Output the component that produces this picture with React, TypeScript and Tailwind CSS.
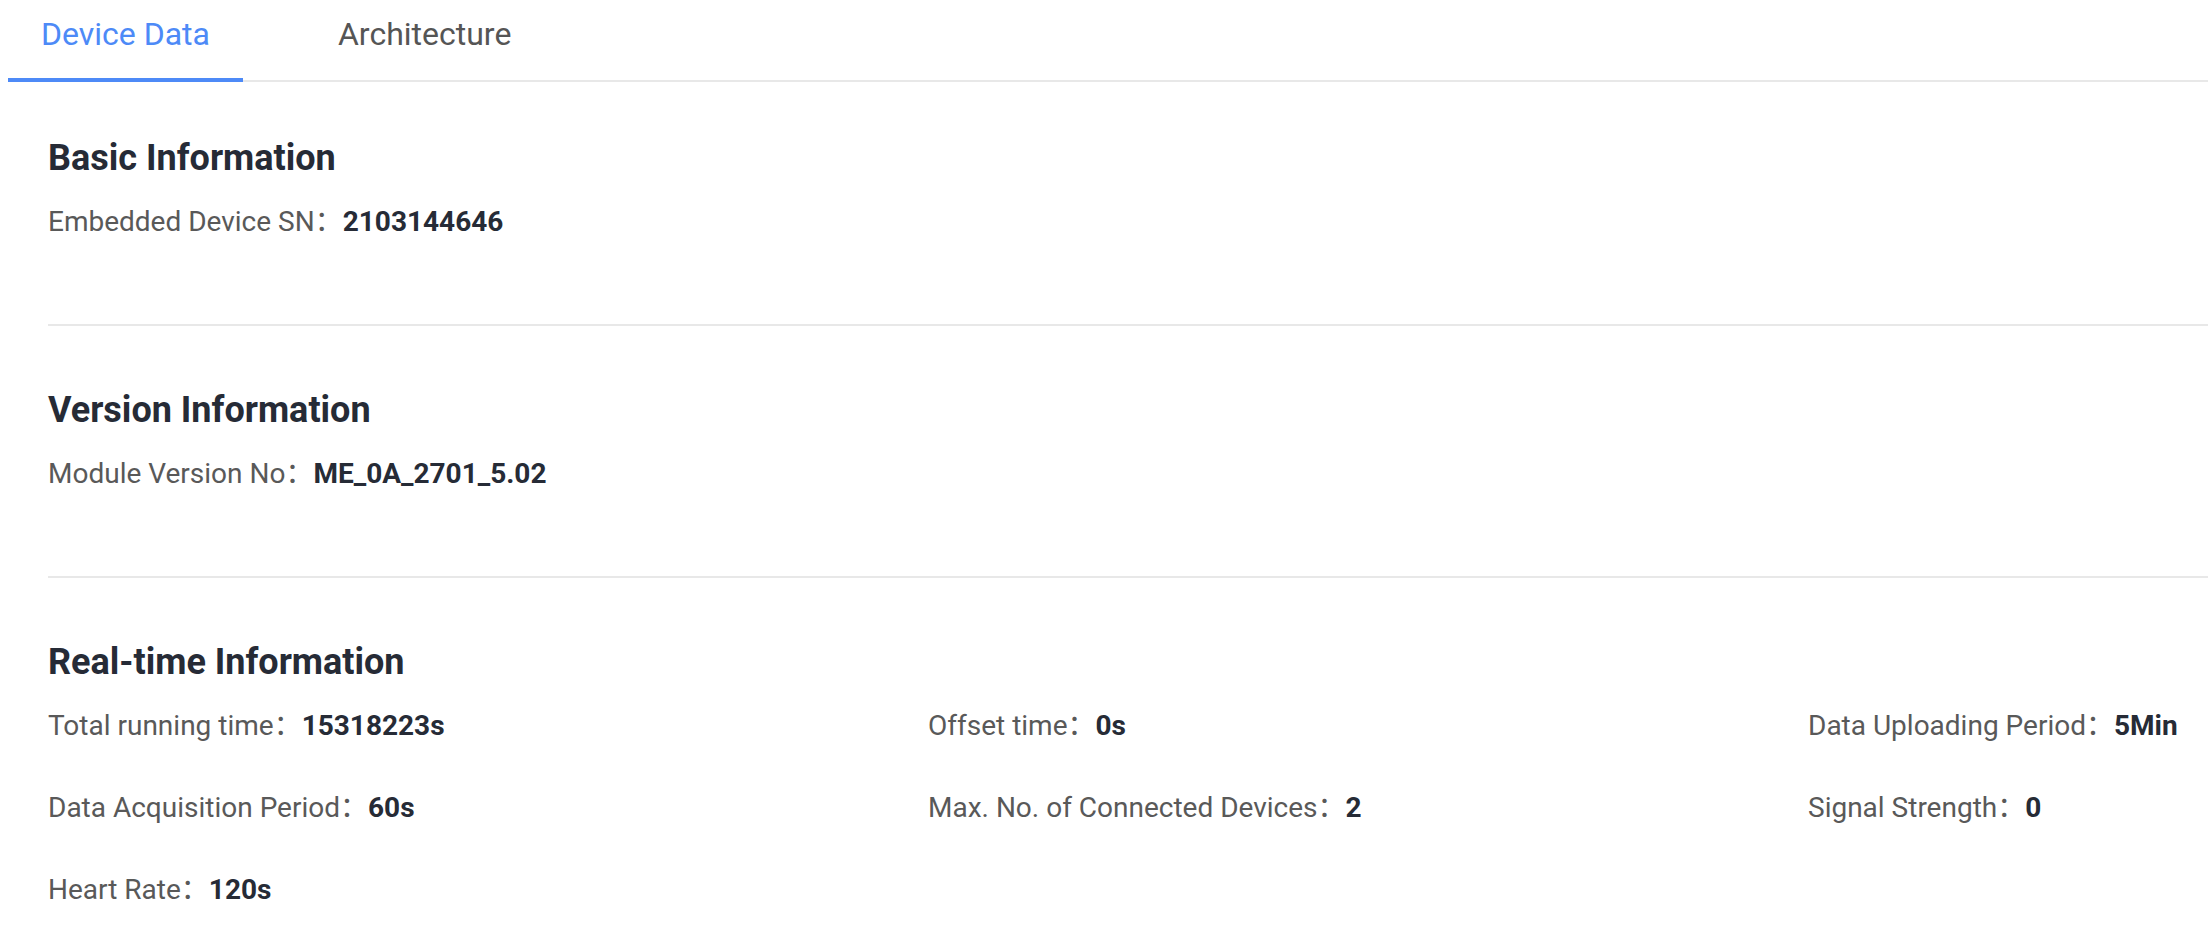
import React from 'react';

type Field = { label: string; value: string };

const basicInfo: Field[] = [{ label: 'Embedded Device SN', value: '2103144646' }];
const versionInfo: Field[] = [{ label: 'Module Version No', value: 'ME_0A_2701_5.02' }];

const realtimeColumns: Field[][] = [
  [
    { label: 'Total running time', value: '15318223s' },
    { label: 'Data Acquisition Period', value: '60s' },
    { label: 'Heart Rate', value: '120s' },
  ],
  [
    { label: 'Offset time', value: '0s' },
    { label: 'Max. No. of Connected Devices', value: '2' },
  ],
  [
    { label: 'Data Uploading Period', value: '5Min' },
    { label: 'Signal Strength', value: '0' },
  ],
];

function InfoField({ label, value }: Field) {
  return (
    <div className="h-[40px] text-[28px] leading-[40px] whitespace-nowrap">
      <span className="text-[#595959]">{label}</span>
      <span className="text-[#595959] leading-none font-['Noto_Sans_CJK_SC',sans-serif]">：</span>
      <span className="font-bold text-[#262b36]">{value}</span>
    </div>
  );
}

function SectionTitle({ children }: { children: React.ReactNode }) {
  return <h2 className="text-[36px] leading-[48px] font-bold text-[#262b36]">{children}</h2>;
}

function Divider() {
  return <div className="h-[2px] bg-[#e8e8e8]" />;
}

export default function App() {
  const tabs = ['Device Data', 'Architecture'];
  const active = 0;

  return (
    <div className="min-h-screen bg-white font-['Roboto','Noto_Sans_CJK_SC',sans-serif]">
      <div className="ml-[8px] flex gap-[62px] border-b-2 border-[#e8e8e8]">
        {tabs.map((tab, i) => (
          <div
            key={tab}
            className={
              i === active
                ? '-mb-[2px] px-[33px] pt-[12px] pb-[22px] text-[32px] leading-[44px] text-[#4d8af7] border-b-4 border-[#4d8af7]'
                : '-mb-[2px] px-[33px] pt-[12px] pb-[22px] text-[32px] leading-[44px] text-[#555555] border-b-4 border-transparent'
            }
          >
            {tab}
          </div>
        ))}
      </div>

      <div className="pl-[48px]">
        <section className="pt-[52px] pb-[82px]">
          <SectionTitle>Basic Information</SectionTitle>
          <div className="mt-[20px]">
            {basicInfo.map(f => (
              <InfoField key={f.label} {...f} />
            ))}
          </div>
        </section>

        <Divider />

        <section className="pt-[60px] pb-[82px]">
          <SectionTitle>Version Information</SectionTitle>
          <div className="mt-[20px]">
            {versionInfo.map(f => (
              <InfoField key={f.label} {...f} />
            ))}
          </div>
        </section>

        <Divider />

        <section className="pt-[60px] pb-[40px]">
          <SectionTitle>Real-time Information</SectionTitle>
          <div className="mt-[20px] flex">
            {realtimeColumns.map((col, i) => (
              <div
                key={i}
                className={i < 2 ? 'w-[880px] flex flex-col gap-[42px]' : 'flex-1 flex flex-col gap-[42px]'}
              >
                {col.map(f => (
                  <InfoField key={f.label} {...f} />
                ))}
              </div>
            ))}
          </div>
        </section>
      </div>
    </div>
  );
}
